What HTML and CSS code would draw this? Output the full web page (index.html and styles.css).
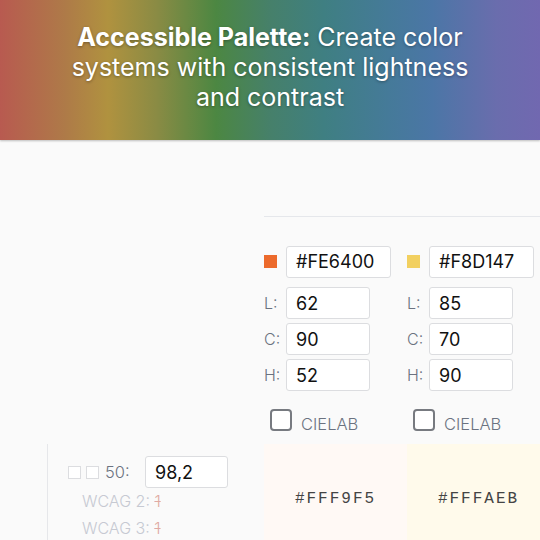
FILE: index.html
```html
<!DOCTYPE html>
<html>
<head>
<meta charset="utf-8">
<link rel="stylesheet" href="styles.css">
</head>
<body>
<header class="hero">
  <h1 class="hero-title"><strong>Accessible Palette:</strong> Create color systems with consistent lightness and contrast</h1>
</header>
<main class="main">
  <div class="rule"></div>
  <div class="grid">
    <div class="corner"></div>
    <div class="col">
      <div class="hex-row"><span class="dot dot-orange"></span><span class="field field-hex">#FE6400</span></div>
      <div class="lch-row"><span class="lab">L:</span><span class="field">62</span></div>
      <div class="lch-row"><span class="lab">C:</span><span class="field">90</span></div>
      <div class="lch-row"><span class="lab">H:</span><span class="field">52</span></div>
      <div class="check-row"><span class="check"></span><span class="check-label">CIELAB</span></div>
    </div>
    <div class="col">
      <div class="hex-row"><span class="dot dot-yellow"></span><span class="field field-hex">#F8D147</span></div>
      <div class="lch-row"><span class="lab">L:</span><span class="field">85</span></div>
      <div class="lch-row"><span class="lab">C:</span><span class="field">70</span></div>
      <div class="lch-row"><span class="lab">H:</span><span class="field">90</span></div>
      <div class="check-row"><span class="check"></span><span class="check-label">CIELAB</span></div>
    </div>

    <div class="side">
      <div class="step-row">
        <span class="mini"></span><span class="mini"></span>
        <span class="step-label">50:</span>
        <span class="field field-step">98,2</span>
      </div>
      <div class="wcag">WCAG 2: <span class="bad">1</span></div>
      <div class="wcag">WCAG 3: <span class="bad">1</span></div>
    </div>
    <div class="cell cell-a">#FFF9F5</div>
    <div class="cell cell-b">#FFFAEB</div>
  </div>
</main>
</body>
</html>
```

FILE: styles.css
```css
* { box-sizing: border-box; }
html, body { margin: 0; padding: 0; }
body {
  width: 540px;
  height: 540px;
  overflow: hidden;
  background: #fafafa;
  font-family: Inter, "Noto Sans", sans-serif;
}
.hero {
  height: 140px;
  display: flex;
  align-items: center;
  justify-content: center;
  background: linear-gradient(90deg, #b85a50 0%, #ae7a48 12%, #b0923f 20%, #8a8b44 29%, #4c8742 40%, #46806a 50%, #3f7f82 60%, #457a99 72%, #4b76a6 80%, #6a6dad 92%, #7168b0 100%);
  box-shadow: 0 1px 2px rgba(0,0,0,0.25);
}
.hero-title {
  margin: 0;
  width: 410px;
  text-align: center;
  color: #ffffff;
  font-size: 25px;
  line-height: 30px;
  font-weight: 400;
  text-shadow: 0 1px 3px rgba(0,0,0,0.35);
  margin-top: -6px;
}
.hero-title strong { font-weight: 700; }

.main { padding-top: 76px; }
.rule {
  margin-left: 264px;
  border-top: 1px solid #e5e7eb;
  height: 0;
}
.grid {
  display: grid;
  grid-template-columns: 264px 143px 143px;
  padding-top: 28px;
}
.col {
  display: flex;
  flex-direction: column;
}
.hex-row {
  display: flex;
  align-items: center;
  height: 33px;
  margin-bottom: 9px;
}
.dot {
  width: 13px;
  height: 13px;
  margin-right: 9px;
}
.dot-orange { background: #ec6a2c; }
.dot-yellow { background: #f2d060; }
.field {
  display: flex;
  align-items: center;
  background: #ffffff;
  border: 1px solid #dcdde0;
  border-radius: 3px;
  height: 32px;
  width: 84px;
  padding-left: 9px;
  font-size: 18px;
  color: #111;
}
.field-hex { width: 105px; }
.lch-row {
  display: flex;
  align-items: center;
  height: 32px;
  margin-bottom: 4px;
}
.lab {
  width: 22px;
  font-size: 16px;
  font-weight: 300;
  color: #6b7280;
}
.check-row {
  display: flex;
  align-items: center;
  margin-top: 14px;
  padding-left: 6px;
  height: 26px;
}
.check {
  width: 22px;
  height: 22px;
  border: 2px solid #777a80;
  border-radius: 4px;
  background: #fff;
  margin-right: 9px;
  margin-top: -4px;
}
.check-label {
  font-size: 16.5px;
  font-weight: 300;
  color: #6b7280;
  margin-top: 4px;
}
.side {
  margin-left: 47px;
  margin-top: 9px;
  border-left: 1px solid #e6e7ea;
  padding-left: 20px;
  padding-top: 12px;
}
.step-row {
  display: flex;
  align-items: center;
  height: 32px;
}
.mini {
  width: 13px;
  height: 13px;
  border: 1px solid #dcdde0;
  background: #fff;
  margin-right: 5px;
}
.step-label {
  font-size: 16.5px;
  font-weight: 300;
  color: #6b7280;
  margin-left: 1px;
  width: 40px;
}
.field-step { width: 83px; }
.wcag {
  padding-left: 14px;
  font-size: 16px;
  font-weight: 300;
  line-height: 27px;
  color: #c6c9d2;
}
.wcag:first-of-type { margin-top: 1px; }
.bad {
  color: #e0aaa3;
  text-decoration: line-through;
}
.cell {
  margin-top: 9px;
  height: 110px;
  display: flex;
  align-items: center;
  justify-content: center;
  font-family: "Liberation Mono", monospace;
  font-size: 16px;
  letter-spacing: 2px;
  color: #444;
}
.cell-a { background: #fff9f5; }
.cell-b { background: #fffaeb; }
```
